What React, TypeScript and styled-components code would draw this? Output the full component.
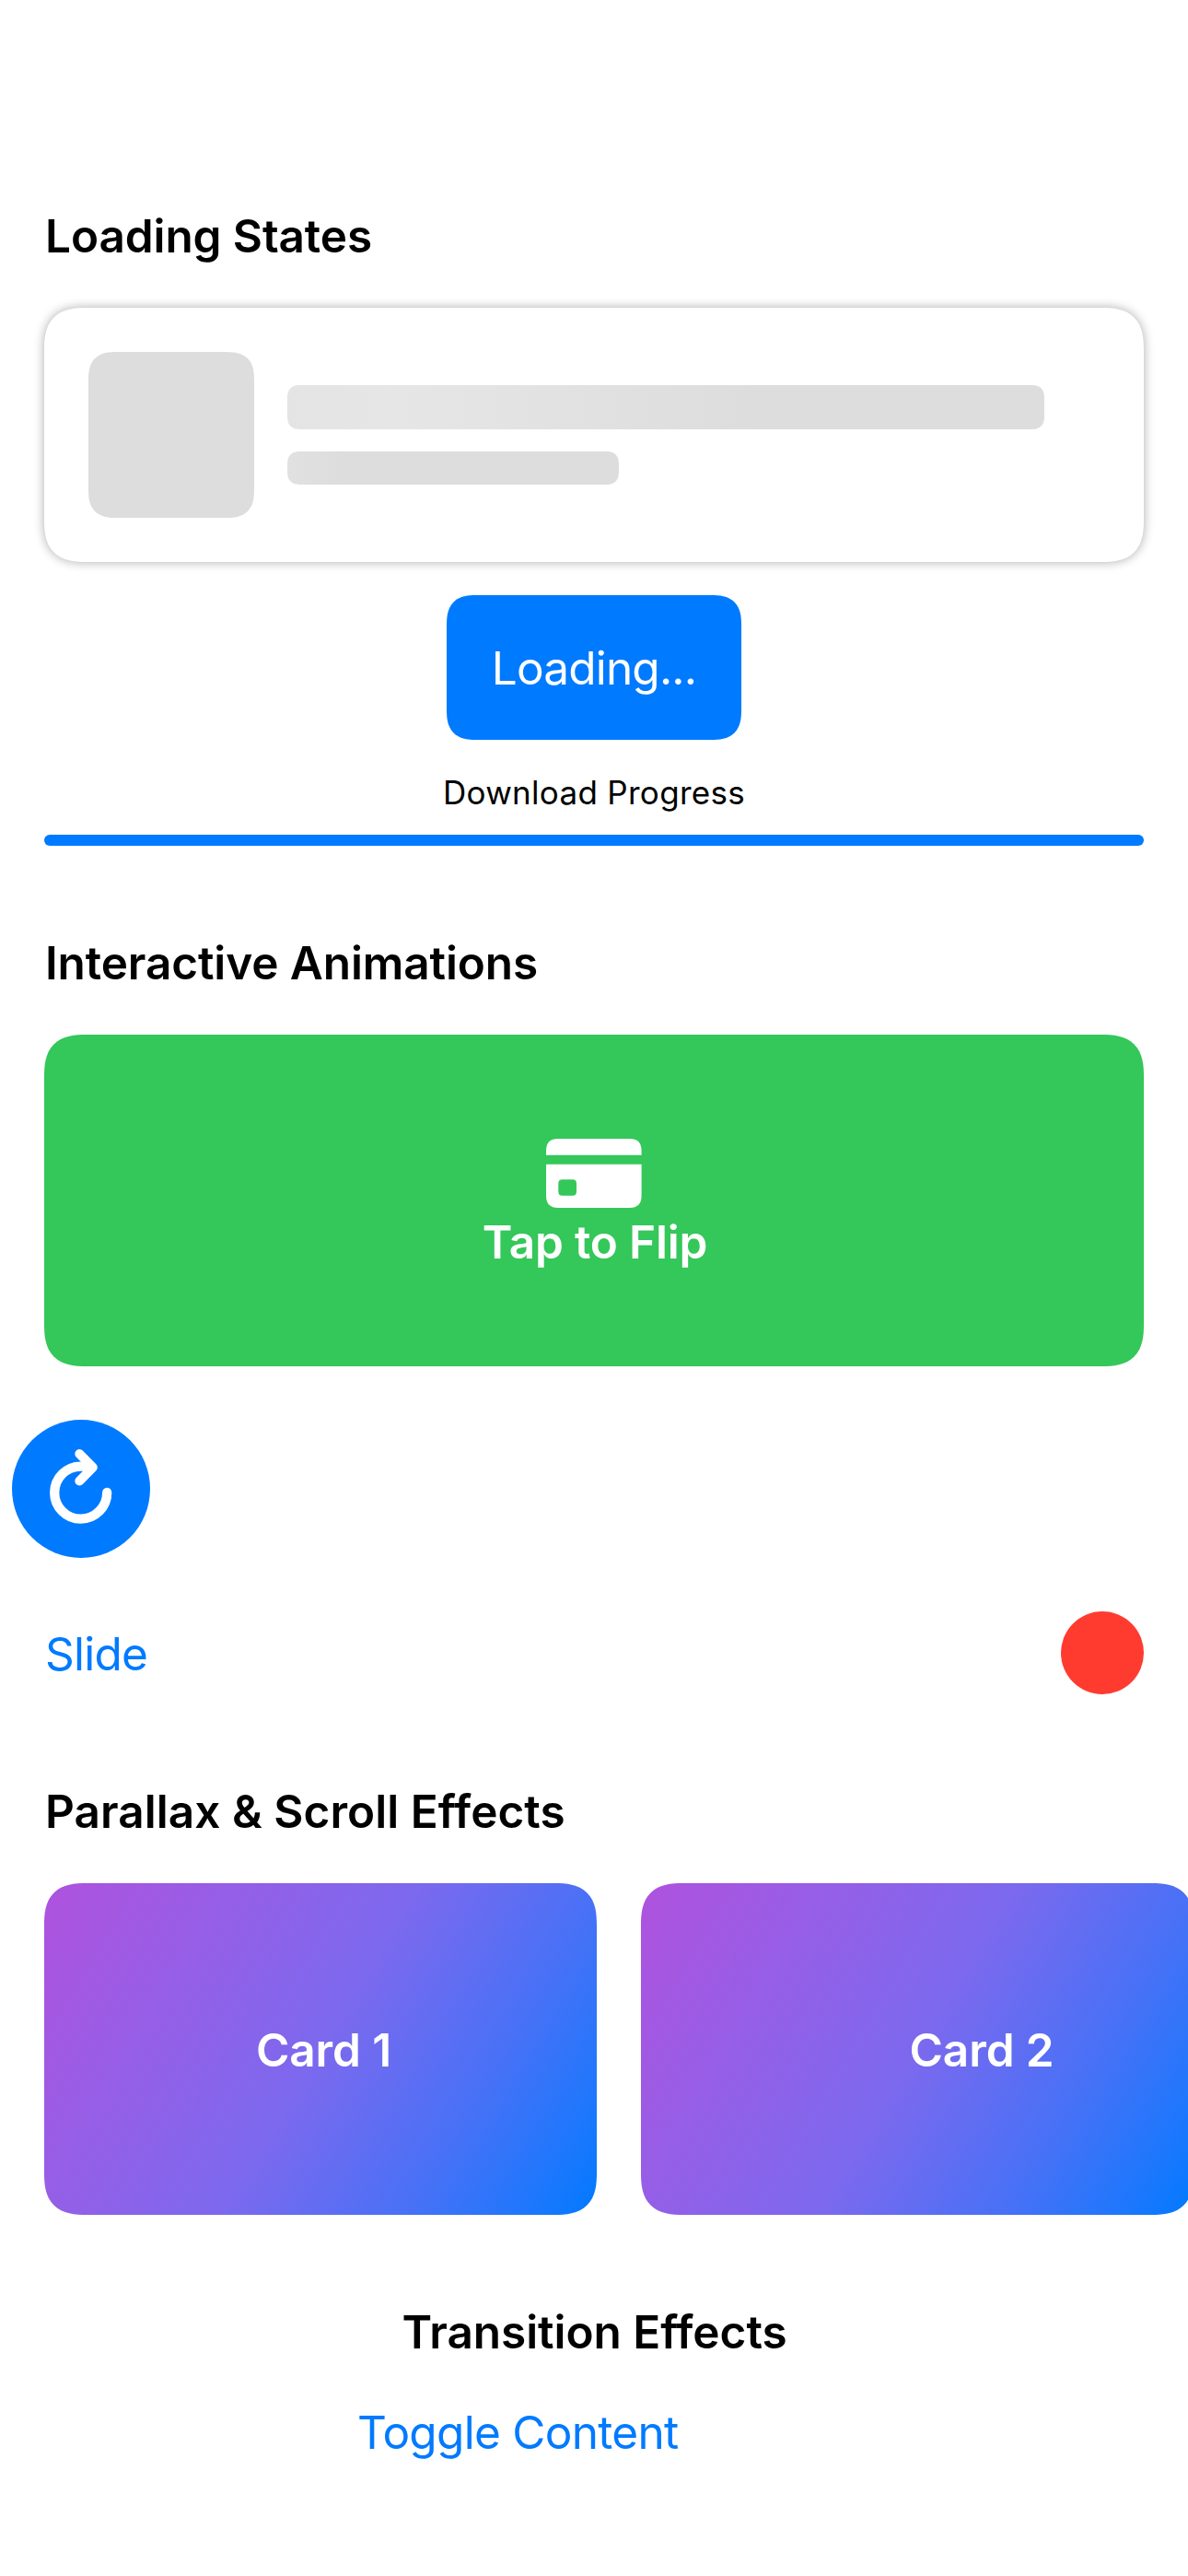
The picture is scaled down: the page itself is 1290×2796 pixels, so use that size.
import React from "react";
import styled, { createGlobalStyle, css } from "styled-components";

const BLUE = "#007aff";
const GREEN = "#34c759";
const RED = "#ff3b30";

const GlobalStyle = createGlobalStyle`
  html, body { margin: 0; padding: 0; background: #ffffff; }
  *, *::before, *::after { box-sizing: border-box; }
`;

/* iOS "continuous" corners: a slightly larger radius on a superellipse curve. */
const continuous = (radius: number) => css`
  border-radius: ${radius}px;
  @supports (corner-shape: superellipse(1.42)) {
    border-radius: ${Math.round(radius * 1.28)}px;
    corner-shape: superellipse(1.42);
  }
`;

const Screen = styled.main`
  display: flex;
  flex-direction: column;
  gap: 96px;
  width: 1290px;
  height: 2796px;
  padding: 225px 48px 0;
  overflow: hidden;
  background: #ffffff;
  color: #000000;
  font-family: Inter, "Liberation Sans", sans-serif;
  font-size: 49.5px;
  line-height: 62px;
  font-variant-ligatures: none;
`;

const Section = styled.section<{ $centered?: boolean }>`
  display: flex;
  flex-direction: column;
  gap: 47px;
  align-items: ${(p) => (p.$centered ? "center" : "stretch")};
`;

const Heading = styled.h2<{ $tracking?: number }>`
  margin: 0;
  padding-left: 1px;
  font: inherit;
  font-weight: 600;
  letter-spacing: ${(p) => p.$tracking ?? -0.1}px;
  white-space: nowrap;
`;

const LoadingStack = styled.div`
  display: flex;
  flex-direction: column;
  align-items: center;
  gap: 36px;
`;

const SkeletonCard = styled.div`
  display: flex;
  align-items: center;
  gap: 36px;
  width: 100%;
  height: 276px;
  padding: 48px;
  background: #ffffff;
  box-shadow: 0 0 12px rgba(0, 0, 0, 0.33);
  ${continuous(36)}
`;

const SkeletonThumb = styled.div`
  width: 180px;
  height: 180px;
  background: #dddddd;
  ${continuous(24)}
`;

const SkeletonLines = styled.div`
  display: flex;
  flex-direction: column;
  gap: 24px;
`;

const SkeletonLine = styled.div<{ $width: number; $height: number; $shimmer: string }>`
  width: ${(p) => p.$width}px;
  height: ${(p) => p.$height}px;
  background: linear-gradient(90deg, ${(p) => p.$shimmer});
  ${continuous(12)}
`;

const LoadingButton = styled.button`
  display: flex;
  align-items: center;
  justify-content: center;
  width: 320px;
  height: 157px;
  padding: 1px 0 0;
  border: 0;
  background: ${BLUE};
  color: #ffffff;
  font: inherit;
  letter-spacing: -0.82px;
  ${continuous(26)}
`;

const Download = styled.div`
  display: flex;
  flex-direction: column;
  align-items: center;
  gap: 24px;
  width: 100%;
`;

const Caption = styled.span`
  font-size: 35px;
  line-height: 43px;
  letter-spacing: 0.3px;
`;

const ProgressBar = styled.div`
  width: 100%;
  height: 12px;
  border-radius: 6px;
  background: ${BLUE};
`;

const FlipCard = styled.div`
  display: flex;
  flex-direction: column;
  align-items: center;
  justify-content: center;
  height: 360px;
  background: ${GREEN};
  color: #ffffff;
  ${continuous(36)}
`;

const FlipLabel = styled.span`
  padding-left: 2px;
  font-weight: 600;
  letter-spacing: -0.17px;
`;

const Controls = styled.div`
  display: flex;
  flex-direction: column;
  gap: 58px;
  margin-top: 11px;
`;

const RotateButton = styled.button`
  width: 150px;
  height: 150px;
  margin-left: -35px;
  padding: 0;
  border: 0;
  border-radius: 50%;
  background: ${BLUE};
  svg { display: block; }
`;

const SlideRow = styled.div`
  display: flex;
  align-items: center;
  justify-content: space-between;
  height: 90px;
`;

const LinkButton = styled.button<{ $tracking: number }>`
  padding: 0;
  border: 0;
  background: none;
  color: ${BLUE};
  font: inherit;
  letter-spacing: ${(p) => p.$tracking}px;
  text-align: left;
  white-space: nowrap;
`;

const SlideButton = styled(LinkButton)`
  padding: 2px 0 0 1px;
`;

const Dot = styled.div`
  width: 90px;
  height: 90px;
  border-radius: 50%;
  background: ${RED};
`;

const Carousel = styled.div`
  display: flex;
  gap: 48px;
  margin-right: -48px;
  overflow: hidden;
`;

const ParallaxCard = styled.div`
  display: flex;
  flex: none;
  align-items: center;
  justify-content: center;
  width: 600px;
  height: 360px;
  padding-top: 2px;
  background: linear-gradient(
    120.96deg,
    #af52de 0%,
    #965ee6 25%,
    #7c69ee 50%,
    #4771f6 75%,
    #1f77fc 90%,
    ${BLUE} 100%
  );
  color: #ffffff;
  font-weight: 600;
  letter-spacing: -0.1px;
  ${continuous(36)}
`;

const ParallaxLabel = styled.span<{ $shift: number }>`
  transform: translateX(${(p) => p.$shift}px);
`;

const ToggleRow = styled.div`
  display: grid;
  grid-template-columns: 348px 118px;
  gap: 48px;
`;

const CardIcon = () => (
  <svg width="120" height="90" viewBox="0 -0.5 120 90" fill="#fff">
    <path d="M8 26.2V21.5Q8 8.5 21 8.5H98.6Q111.6 8.5 111.6 21.5V26.2Z" />
    <path
      fillRule="evenodd"
      d="M8 36.2H111.6V70.3Q111.6 83.5 98.6 83.5H21Q8 83.5 8 70.3ZM25.5 52.7Q21.3 52.7 21.3 57V66Q21.3 70.2 25.5 70.2H36.8Q41 70.2 41 66V57Q41 52.7 36.8 52.7Z"
    />
  </svg>
);

const RotateIcon = () => (
  <svg
    width="150"
    height="150"
    viewBox="0 0 150 150"
    fill="none"
    stroke="#fff"
    strokeLinecap="round"
    strokeLinejoin="round"
  >
    <path d="M103.2 79A28.5 28.5 0 1 1 74.7 50.6H84" strokeWidth="10.3" />
    <path d="M73.3 37L87.8 51.8L73.3 66.4" strokeWidth="10" />
  </svg>
);

const parallaxCards = [
  { title: "Card 1", shift: 3.5 },
  { title: "Card 2", shift: 70 },
];

export default function App() {
  return (
    <>
      <GlobalStyle />
      <Screen>
        <Section>
          <Heading>Loading States</Heading>
          <LoadingStack>
            <SkeletonCard>
              <SkeletonThumb />
              <SkeletonLines>
                <SkeletonLine
                  $width={822}
                  $height={48}
                  $shimmer="#e4e4e4 0, #e6e6e6 112px, #dddddd 500px"
                />
                <SkeletonLine $width={360} $height={36} $shimmer="#e1e1e1 0, #dddddd 60px" />
              </SkeletonLines>
            </SkeletonCard>
            <LoadingButton>Loading...</LoadingButton>
            <Download>
              <Caption>Download Progress</Caption>
              <ProgressBar />
            </Download>
          </LoadingStack>
        </Section>

        <Section>
          <Heading>Interactive Animations</Heading>
          <FlipCard>
            <CardIcon />
            <FlipLabel>Tap to Flip</FlipLabel>
          </FlipCard>
          <Controls>
            <RotateButton aria-label="Rotate">
              <RotateIcon />
            </RotateButton>
            <SlideRow>
              <SlideButton $tracking={-0.75}>Slide</SlideButton>
              <Dot />
            </SlideRow>
          </Controls>
        </Section>

        <Section>
          <Heading $tracking={0.05}>Parallax &amp; Scroll Effects</Heading>
          <Carousel>
            {parallaxCards.map((card) => (
              <ParallaxCard key={card.title}>
                <ParallaxLabel $shift={card.shift}>{card.title}</ParallaxLabel>
              </ParallaxCard>
            ))}
          </Carousel>
        </Section>

        <Section $centered>
          <Heading $tracking={-0.04}>Transition Effects</Heading>
          <ToggleRow>
            <LinkButton $tracking={-0.7}>Toggle Content</LinkButton>
          </ToggleRow>
        </Section>
      </Screen>
    </>
  );
}
